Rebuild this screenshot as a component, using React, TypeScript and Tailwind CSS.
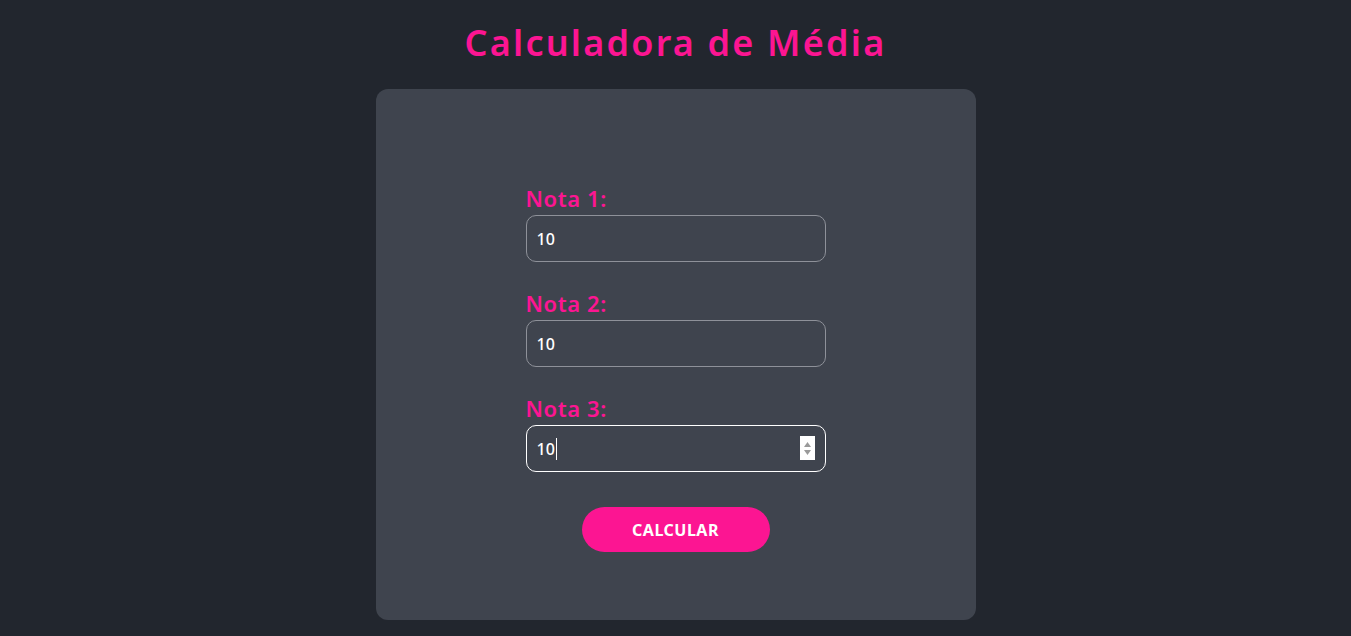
import React from "react";

const font = { fontFamily: '"Noto Sans", "Open Sans", sans-serif' };

function Field({ label, focused }: { label: string; focused?: boolean }) {
  return (
    <div className="flex flex-col">
      <label className="block h-[33px] text-[22px] leading-[33px] font-semibold tracking-[0.6px] text-[#fc1592]">
        {label}
      </label>
      {focused ? (
        <div className="relative flex h-[47px] w-[300px] items-center rounded-[10px] border border-white px-[10px] text-[16px] font-medium text-white">
          <span>10</span>
          <span className="ml-[1px] inline-block h-[22px] w-px bg-white" />
          <div className="absolute right-[10px] top-[10px] flex h-[24px] w-[15px] flex-col items-center justify-center gap-[3px] bg-white">
            <svg width="7" height="5" viewBox="0 0 7 5"><path d="M3.5 0 L7 5 L0 5 Z" fill="#9a9a9a" /></svg>
            <svg width="7" height="5" viewBox="0 0 7 5"><path d="M0 0 L7 0 L3.5 5 Z" fill="#9a9a9a" /></svg>
          </div>
        </div>
      ) : (
        <div className="flex h-[47px] w-[300px] items-center rounded-[10px] border border-[#8e9199] px-[10px] text-[16px] font-medium text-white">
          10
        </div>
      )}
    </div>
  );
}

export default function App() {
  return (
    <div className="flex min-h-[636px] w-full flex-col items-center bg-[#22262e]" style={font}>
      <h1 className="mt-[16px] h-[54px] text-[36px] leading-[54px] font-semibold tracking-[2.2px] text-[#fc1592]">
        Calculadora de Média
      </h1>
      <div className="mt-[19px] flex h-[531px] w-[600px] flex-col items-center rounded-[12px] bg-[#3f444e] pt-[93px]">
        <div className="flex w-[300px] flex-col gap-[25px]">
          <Field label="Nota 1:" />
          <Field label="Nota 2:" />
          <Field label="Nota 3:" focused />
        </div>
        <button className="mt-[35px] h-[45px] w-[188px] rounded-full bg-[#fc1592] text-[16px] font-bold tracking-[0.5px] text-white">
          CALCULAR
        </button>
      </div>
    </div>
  );
}
